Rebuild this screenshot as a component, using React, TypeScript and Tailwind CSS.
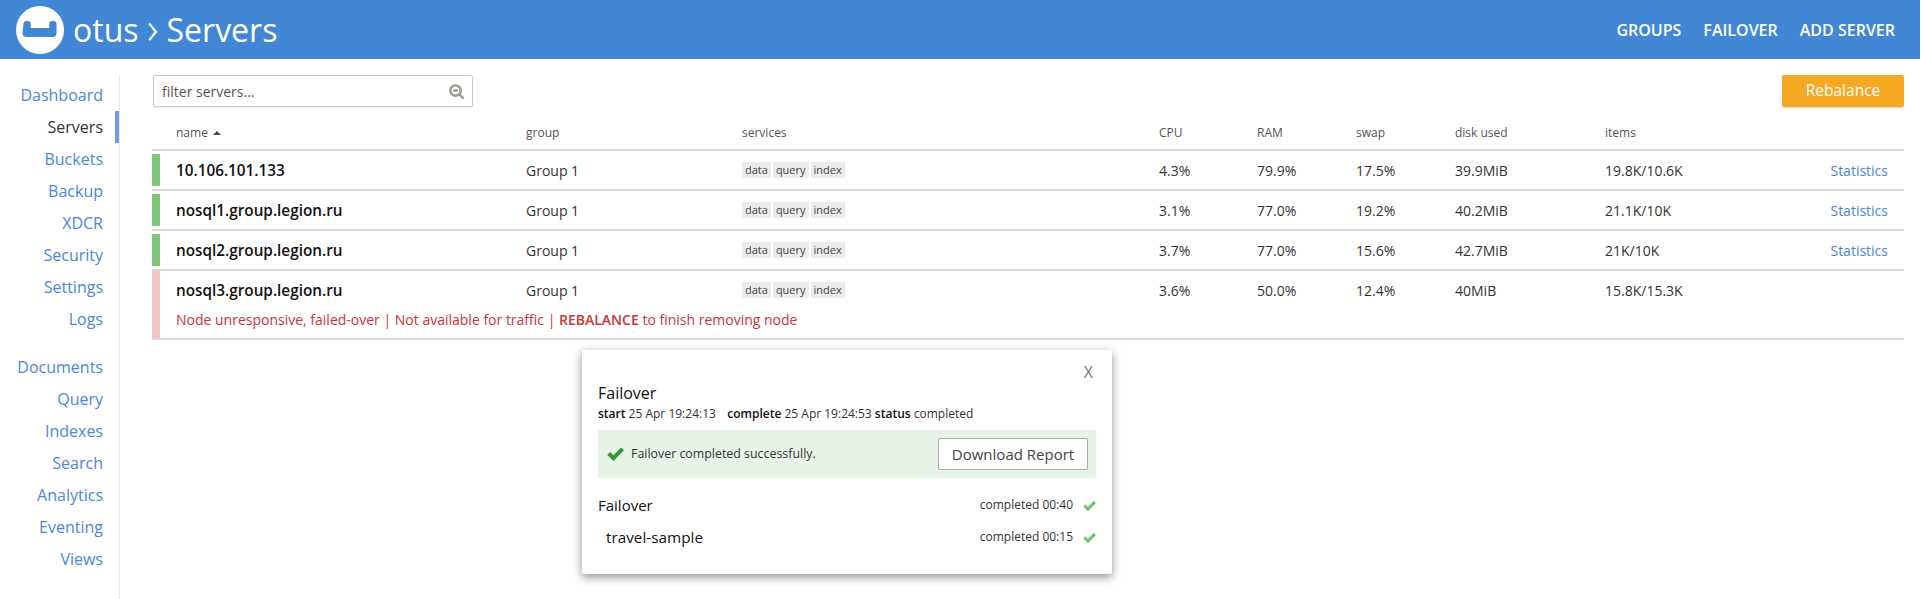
const navTop = ['Dashboard', 'Servers', 'Buckets', 'Backup', 'XDCR', 'Security', 'Settings', 'Logs']
const navBottom = ['Documents', 'Query', 'Indexes', 'Search', 'Analytics', 'Eventing', 'Views']

const servers = [
  { name: '10.106.101.133', cpu: '4.3%', ram: '79.9%', swap: '17.5%', disk: '39.9MiB', items: '19.8K/10.6K', ok: true },
  { name: 'nosql1.group.legion.ru', cpu: '3.1%', ram: '77.0%', swap: '19.2%', disk: '40.2MiB', items: '21.1K/10K', ok: true },
  { name: 'nosql2.group.legion.ru', cpu: '3.7%', ram: '77.0%', swap: '15.6%', disk: '42.7MiB', items: '21K/10K', ok: true },
  { name: 'nosql3.group.legion.ru', cpu: '3.6%', ram: '50.0%', swap: '12.4%', disk: '40MiB', items: '15.8K/15.3K', ok: false },
]

function NavItem({ label }: { label: string }) {
  const active = label === 'Servers'
  return (
    <a className={`flex h-8 items-center justify-end ${active ? 'border-r-4 border-[#6c9be0] pr-[12px] text-[#333]' : 'pr-[16px] text-[#4f84dd]'}`}>
      {label}
    </a>
  )
}

function Logo() {
  return (
    <svg width="48" height="48" viewBox="0 0 48 48">
      <circle cx="24" cy="24" r="24" fill="#fff" />
      <path
        d="M7.500 18c0-1.800 1.200-3 3-3h1.500c1.600 0 2.700 1.100 2.700 2.700V22h18.600v-4.300c0-1.600 1.100-2.700 2.700-2.700h1.500c1.800 0 3 1.200 3 3v9c0 2.500-1.500 4-4 4h-26c-2.500 0-4-1.500-4-4z"
        fill="#4287d6"
      />
    </svg>
  )
}

function Check({ size, color }: { size: number; color: string }) {
  return (
    <svg width={size} height={size} viewBox="0 0 18 18" fill="none" stroke={color} strokeWidth="4.200">
      <path d="M1.800 9l5 5L16.500 4" />
    </svg>
  )
}

function Services() {
  return (
    <div className="flex gap-[2px]">
      {['data', 'query', 'index'].map(s => (
        <span key={s} className="flex h-4 items-center rounded-[1px] bg-[#ececec] px-[3px] text-[11px] text-[#444]">
          {s}
        </span>
      ))}
    </div>
  )
}

export default function App() {
  return (
    <div className="relative h-[599px] w-[1920px] overflow-hidden bg-white text-[14px] text-[#333] font-['Open_Sans',sans-serif]">
      <header className="flex h-[59px] items-center justify-between bg-[#4287d6] pl-4 pr-[25px] text-white">
        <div className="flex items-center text-[32px] leading-[48px]">
          <Logo />
          <span className="ml-[9px]">otus</span>
          <span className="flex w-[28px] justify-center pb-[6px] text-[44px] font-light leading-[48px]">›</span>
          <span>Servers</span>
        </div>
        <nav className="flex gap-[22px] text-[16px] font-semibold">
          <a>GROUPS</a>
          <a>FAILOVER</a>
          <a>ADD SERVER</a>
        </nav>
      </header>

      <div className="flex h-[540px] pt-4">
        <aside className="h-full w-[120px] border-r border-[#e8e8e8] pt-[4px] text-[16px]">
          {navTop.map(n => <NavItem key={n} label={n} />)}
          <div className="h-4" />
          {navBottom.map(n => <NavItem key={n} label={n} />)}
        </aside>

        <main className="ml-[32px] w-[1752px]">
          <div className="flex items-center justify-between">
            <div className="ml-px flex h-8 w-[320px] items-center justify-between rounded-[2px] border border-[#ccc] pl-[8px] pr-[7px] shadow-[0_1px_1px_rgba(0,0,0,0.05)]">
              <span className="text-[14px] text-[#555]">filter servers...</span>
              <svg width="17" height="17" viewBox="0 0 18 18" fill="none" stroke="#9a9a94" strokeWidth="2.600">
                <circle cx="8" cy="8" r="5.500" />
                <path d="M5.500 8h5M12 12l4.500 4.500" />
              </svg>
            </div>
            <button className="h-8 w-[122px] rounded-[2px] bg-[#f7a823] text-[15.5px] text-white shadow-[0_1px_1px_rgba(0,0,0,0.15)]">
              Rebalance
            </button>
          </div>

          <div className="mt-[10px] flex h-[34px] items-center border-b-2 border-[#d8d8d8] pl-[24px] text-[12px] text-[#555]">
            <div className="flex w-[350px] items-center gap-[5px]">
              name
              <span className="mb-[1px] h-0 w-0 border-x-[4px] border-b-[4px] border-x-transparent border-b-[#444]" />
            </div>
            <div className="w-[216px]">group</div>
            <div className="w-[417px]">services</div>
            <div className="w-[98px]">CPU</div>
            <div className="w-[99px]">RAM</div>
            <div className="w-[99px]">swap</div>
            <div className="w-[150px]">disk used</div>
            <div>items</div>
          </div>

          {servers.map(s => (
            <div key={s.name} className="flex border-b-2 border-[#d8d8d8]">
              {s.ok ? (
                <div className="my-[3px] w-2 bg-[#7fc678]" />
              ) : (
                <div className="w-2 bg-[#f3c6c6]" />
              )}
              <div className="flex-1 pl-[16px]">
                <div className="flex h-[38px] items-center">
                  <div className="w-[350px] text-[15.3px] font-semibold text-[#111]">{s.name}</div>
                  <div className="w-[216px]">Group 1</div>
                  <div className="w-[417px]"><Services /></div>
                  <div className="w-[98px]">{s.cpu}</div>
                  <div className="w-[99px]">{s.ram}</div>
                  <div className="w-[99px]">{s.swap}</div>
                  <div className="w-[150px]">{s.disk}</div>
                  <div className="w-[160px]">{s.items}</div>
                  {s.ok && <a className="ml-auto pr-4 text-[#4f84dd]">Statistics</a>}
                </div>
                {!s.ok && (
                  <div className="flex h-[29px] items-start text-[14px] text-[#c9353a]">
                    <span>
                      Node unresponsive, failed-over | Not available for traffic | <span className="font-semibold">REBALANCE</span> to finish removing node
                    </span>
                  </div>
                )}
              </div>
            </div>
          ))}
        </main>
      </div>

      <div className="absolute left-[582px] top-[350px] h-[224px] w-[530px] rounded-[2px] bg-white px-[16px] pt-[32px] shadow-[0_3px_10px_rgba(0,0,0,0.45)]">
        <span className="absolute right-[19px] top-[10px] text-[16px] text-[#777]">X</span>
        <h2 className="text-[16px] font-medium leading-[22px] text-[#111]">Failover</h2>
        <p className="mt-px text-[12px] leading-[18px]">
          <b className="font-semibold text-[#111]">start</b> 25 Apr 19:24:13 &nbsp; <b className="ml-[2px] font-semibold text-[#111]">complete</b> 25 Apr 19:24:53 <b className="font-semibold text-[#111]">status</b> completed
        </p>
        <div className="mt-[7px] flex h-[48px] items-center justify-between bg-[#e8f3e8] pl-[9px] pr-[8px]">
          <div className="flex items-center gap-[7px] text-[12.4px]">
            <Check size={17} color="#2f9a2f" />
            Failover completed successfully.
          </div>
          <button className="h-8 w-[150px] rounded-[2px] border border-[#aaa] bg-white text-[15px] text-[#444]">
            Download Report
          </button>
        </div>
        <div className="mt-[11px] flex h-[32px] items-center justify-between text-[15px] font-medium text-[#111]">
          <span>Failover</span>
          <span className="flex items-center gap-[10px] text-[12px] font-normal text-[#333]">
            completed 00:40 <Check size={13} color="#79c072" />
          </span>
        </div>
        <div className="flex h-[32px] items-center justify-between pl-[8px] text-[15.3px] font-medium text-[#111]">
          <span>travel-sample</span>
          <span className="flex items-center gap-[10px] text-[12px] font-normal text-[#333]">
            completed 00:15 <Check size={13} color="#79c072" />
          </span>
        </div>
      </div>
    </div>
  )
}
